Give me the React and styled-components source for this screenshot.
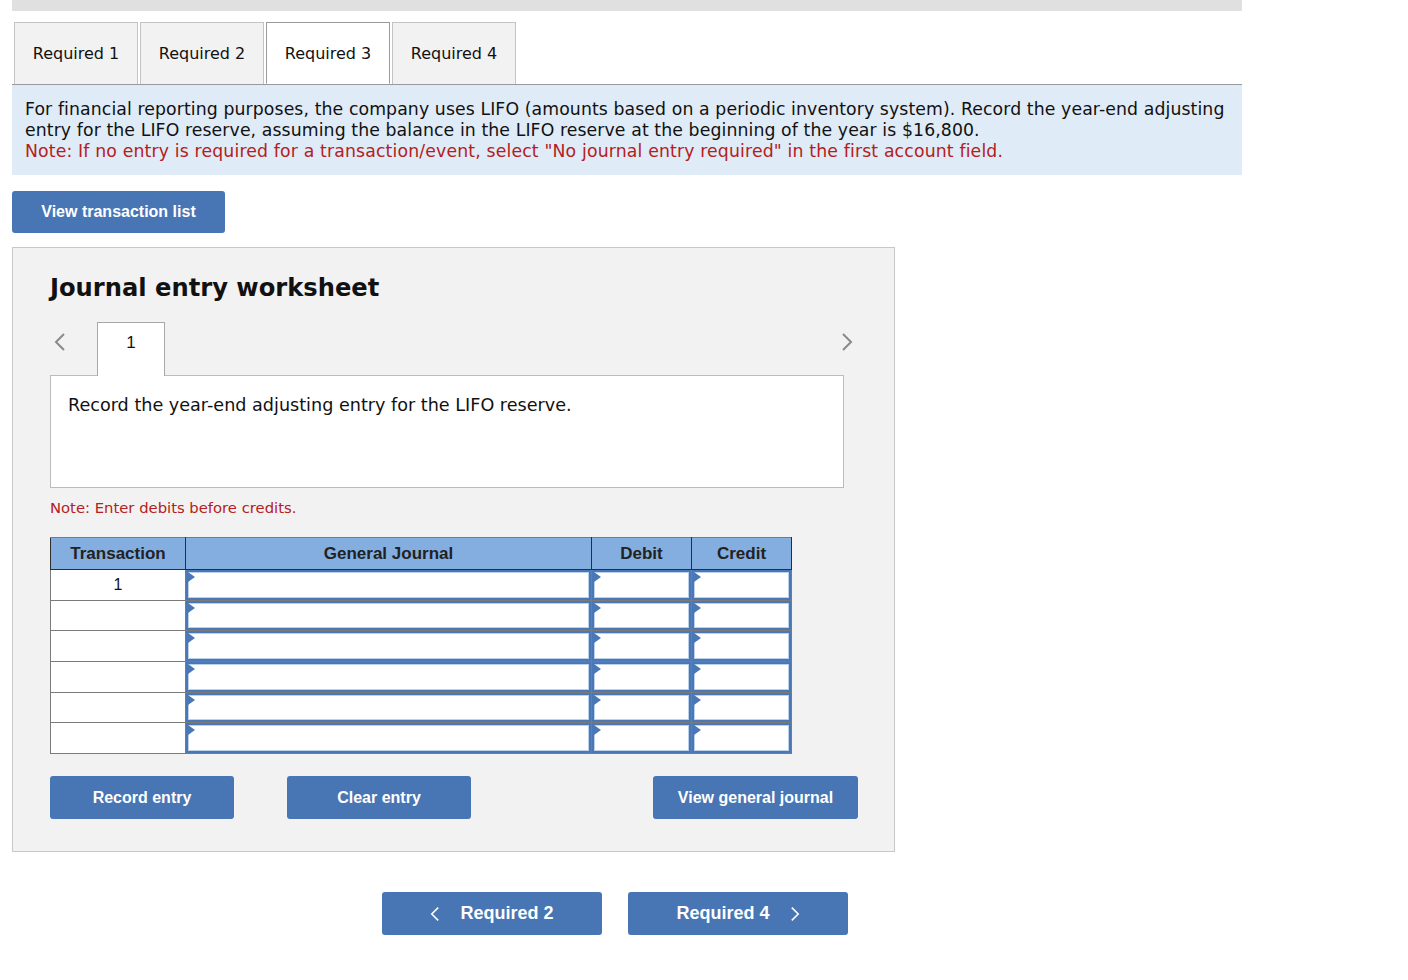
import React from "react";
import styled, { createGlobalStyle } from "styled-components";

const GlobalStyle = createGlobalStyle`
  body {
    margin: 0;
    background: #fff;
    font-family: "DejaVu Sans", Verdana, sans-serif;
    color: #111;
  }
`;

const Page = styled.div`
  width: 1230px;
  margin-left: 12px;
`;

const TopBar = styled.div`
  height: 11px;
  background: #e0e0e0;
`;

const Tabs = styled.div`
  display: flex;
  gap: 2px;
  margin-top: 11px;
  padding-left: 2px;
  border-bottom: 1px solid #9a9a9a;
`;

const Tab = styled.div`
  height: 62px;
  box-sizing: border-box;
  width: 124px;
  display: flex;
  align-items: center;
  justify-content: center;
  font-size: 16px;
  color: #111;
  background: ${(p) => (p.$active ? "#fff" : "#f2f2f2")};
  border: 1px solid ${(p) => (p.$active ? "#9a9a9a" : "#c4c4c4")};
  border-bottom: ${(p) => (p.$active ? "1px solid #fff" : "none")};
  margin-bottom: ${(p) => (p.$active ? "-1px" : "0")};
`;

const Info = styled.div`
  background: #dfebf7;
  padding: 14px 4px 13px 13px;
  font-size: 17.3px;
  line-height: 21px;
  letter-spacing: 0.1px;
  color: #111;
`;

const Red = styled.span`
  color: #b42020;
  letter-spacing: 0.15px;
`;

const BlueButton = styled.button`
  background: #4875b4;
  color: #fff;
  border: none;
  border-radius: 3px;
  font-family: "Liberation Sans", Arial, sans-serif;
  font-weight: bold;
  font-size: 16px;
  height: ${(p) => p.$h || 43}px;
  width: ${(p) => p.$w}px;
  padding: 0;
  display: flex;
  align-items: center;
  justify-content: center;
  gap: ${(p) => p.$gap || 0}px;
  cursor: pointer;
`;

const TopButton = styled(BlueButton)`
  margin-top: 16px;
`;

const Panel = styled.div`
  margin-top: 14px;
  width: 883px;
  box-sizing: border-box;
  background: #f2f2f2;
  border: 1px solid #c8c8c8;
  padding: 25px 37px 32px;
`;

const Title = styled.h2`
  margin: 0;
  font-family: "DejaVu Sans", Verdana, sans-serif;
  font-weight: bold;
  font-size: 24.2px;
  line-height: 30px;
  color: #111;
`;

const EntryNav = styled.div`
  display: flex;
  align-items: flex-start;
  margin-top: 19px;
  height: 53px;
`;

const Arrow = styled.span`
  display: flex;
  align-items: center;
  height: 40px;
  padding-left: ${(p) => p.$pl || 0}px;
`;

const EntryTab = styled.div`
  margin-left: 31px;
  width: 68px;
  height: 54px;
  box-sizing: border-box;
  background: #fff;
  border: 1px solid #a8a8a8;
  border-bottom: none;
  position: relative;
  z-index: 1;
  text-align: center;
  padding-top: 10px;
  font-family: "Liberation Sans", Arial, sans-serif;
  font-size: 17px;
`;

const Spacer = styled.div`
  flex: 1;
`;

const EntryBox = styled.div`
  width: 794px;
  height: 113px;
  box-sizing: border-box;
  background: #fff;
  border: 1px solid #bcbcbc;
  padding: 19px 17px;
  font-size: 17.6px;
  line-height: 21px;
`;

const Note = styled.div`
  margin-top: 10px;
  font-size: 14.8px;
  line-height: 20px;
  color: #b42020;
`;

const Table = styled.table`
  margin-top: 19px;
  border-collapse: collapse;
  width: 741px;
  table-layout: fixed;
  font-family: "Liberation Sans", Arial, sans-serif;
`;

const Th = styled.th`
  background: #84aee0;
  color: #222;
  font-size: 17px;
  font-weight: bold;
  height: 32px;
  padding: 0;
  border: 1px solid #2e2e2e;
  border-top-color: #7a7a7a;
  box-sizing: border-box;
`;

const Td = styled.td`
  border: 1px solid #7b7b7b;
  padding: 0;
  height: 29.7px;
  text-align: center;
  font-size: 16px;
  color: #111;
  background: #fff;
  vertical-align: middle;
`;

const Input = styled.div`
  position: relative;
  height: 29.7px;
  box-sizing: border-box;
  border: 2px solid #4a77b6;
  box-shadow: inset 0 0 0 1px #bcd0ea;
  background: #fff;
  &::before {
    content: "";
    position: absolute;
    top: 0;
    left: 0;
    border-left: 7px solid #4a77b6;
    border-top: 5px solid transparent;
    border-bottom: 5px solid transparent;
  }
`;

const Actions = styled.div`
  display: flex;
  margin-top: 22px;
  width: 808px;
`;

const ClearWrap = styled.div`
  margin-left: 53px;
`;

const RightWrap = styled.div`
  margin-left: auto;
`;

const BottomNav = styled.div`
  display: flex;
  gap: 26px;
  margin-top: 40px;
  padding-left: 370px;
  margin-bottom: 40px;
`;

const BigLabel = styled.span`
  font-size: 18px;
`;

const Chevron = ({ dir = "left", color = "#8a8a8a", w = 12, h = 20, sw = 2 }) => (
  <svg width={w} height={h} viewBox="0 0 12 20">
    <path
      d={dir === "left" ? "M10 2 L2 10 L10 18" : "M2 2 L10 10 L2 18"}
      fill="none"
      stroke={color}
      strokeWidth={sw}
    />
  </svg>
);

const rows = [1, 2, 3, 4, 5, 6];

export default function App() {
  return (
    <Page>
      <GlobalStyle />
      <TopBar />
      <Tabs>
        <Tab>Required 1</Tab>
        <Tab>Required 2</Tab>
        <Tab $active>Required 3</Tab>
        <Tab>Required 4</Tab>
      </Tabs>
      <Info>
        For financial reporting purposes, the company uses LIFO (amounts based on a periodic
        inventory system). Record the year-end adjusting
        <br />
        entry for the LIFO reserve, assuming the balance in the LIFO reserve at the beginning of
        the year is $16,800.
        <br />
        <Red>
          Note: If no entry is required for a transaction/event, select "No journal entry
          required" in the first account field.
        </Red>
      </Info>
      <TopButton $w={213} $h={42}>View transaction list</TopButton>

      <Panel>
        <Title>Journal entry worksheet</Title>
        <EntryNav>
          <Arrow $pl={4}>
            <Chevron dir="left" />
          </Arrow>
          <EntryTab>1</EntryTab>
          <Spacer />
          <Arrow>
            <Chevron dir="right" />
          </Arrow>
          <Arrow $pl={4} />
        </EntryNav>
        <EntryBox>Record the year-end adjusting entry for the LIFO reserve.</EntryBox>
        <Note>Note: Enter debits before credits.</Note>
        <Table>
          <colgroup>
            <col style={{ width: 135 }} />
            <col style={{ width: 406 }} />
            <col style={{ width: 100 }} />
            <col style={{ width: 100 }} />
          </colgroup>
          <thead>
            <tr>
              <Th>Transaction</Th>
              <Th>General Journal</Th>
              <Th>Debit</Th>
              <Th>Credit</Th>
            </tr>
          </thead>
          <tbody>
            {rows.map((r) => (
              <tr key={r}>
                <Td>{r === 1 ? "1" : ""}</Td>
                <Td>
                  <Input />
                </Td>
                <Td>
                  <Input />
                </Td>
                <Td>
                  <Input />
                </Td>
              </tr>
            ))}
          </tbody>
        </Table>
        <Actions>
          <BlueButton $w={184}>Record entry</BlueButton>
          <ClearWrap>
            <BlueButton $w={184}>Clear entry</BlueButton>
          </ClearWrap>
          <RightWrap>
            <BlueButton $w={205}>View general journal</BlueButton>
          </RightWrap>
        </Actions>
      </Panel>

      <BottomNav>
        <BlueButton $w={220} $gap={20}>
          <Chevron dir="left" color="#fff" w={10} h={16} />
          <BigLabel>Required 2</BigLabel>
        </BlueButton>
        <BlueButton $w={220} $gap={20}>
          <BigLabel>Required 4</BigLabel>
          <Chevron dir="right" color="#fff" w={10} h={16} />
        </BlueButton>
      </BottomNav>
    </Page>
  );
}
